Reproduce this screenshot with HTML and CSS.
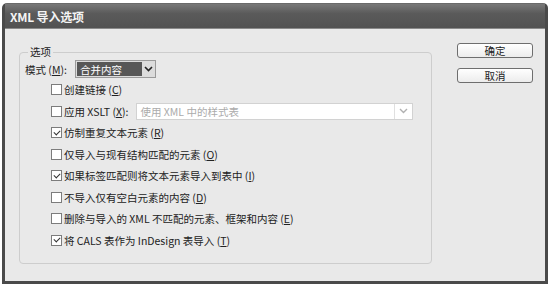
FILE: index.html
```html
<!DOCTYPE html>
<html lang="zh-CN">
<head>
    <meta charset="UTF-8">
    <title>XML 导入选项</title>
    <link rel="stylesheet" href="styles.css">
</head>
<body>
    <div class="window">
        <div class="titlebar"><span class="title">XML 导入选项</span></div>
        <div class="content">
            <fieldset class="group">
                <legend>选项</legend>
                <div class="mode-row">
                    <span class="label">模式 (<u>M</u>):</span>
                    <div class="select dark">
                        <span class="value">合并内容</span>
                        <span class="arrow"><svg width="9" height="6" viewBox="0 0 9 6"><polyline points="1,1 4.5,4.5 8,1" fill="none" stroke="#222" stroke-width="1.6"/></svg></span>
                    </div>
                </div>
                <ul class="options">
                    <li><span class="check"></span>创建链接 (<u>C</u>)</li>
                    <li>
                        <span class="check"></span>应用 XSLT (<u>X</u>):
                        <div class="select disabled">
                            <span class="value">使用 XML 中的样式表</span>
                            <span class="arrow"><svg width="9" height="6" viewBox="0 0 9 6"><polyline points="1,1 4.5,4.5 8,1" fill="none" stroke="#b0b0b0" stroke-width="1.4"/></svg></span>
                        </div>
                    </li>
                    <li><span class="check on"></span>仿制重复文本元素 (<u>R</u>)</li>
                    <li><span class="check"></span>仅导入与现有结构匹配的元素 (<u>O</u>)</li>
                    <li><span class="check on"></span>如果标签匹配则将文本元素导入到表中 (<u>I</u>)</li>
                    <li><span class="check"></span>不导入仅有空白元素的内容 (<u>D</u>)</li>
                    <li><span class="check"></span>删除与导入的 XML 不匹配的元素、框架和内容 (<u>E</u>)</li>
                    <li><span class="check on"></span>将 CALS 表作为 InDesign 表导入 (<u>T</u>)</li>
                </ul>
            </fieldset>
            <div class="buttons">
                <button>确定</button>
                <button>取消</button>
            </div>
        </div>
    </div>
</body>
</html>
```

FILE: styles.css
```css
body {
    margin: 0;
    padding: 0;
    background: #ffffff;
    font-family: "Noto Sans CJK SC", "Noto Sans", sans-serif;
    font-size: 10.5px;
    color: #222;
}

.window {
    margin: 3px 0 0 2px;
    width: 546px;
    height: 281px;
    box-sizing: border-box;
    border: 3px solid #4a4a4a;
    border-top: 1px solid #6a6a6a;
    border-radius: 5px 5px 0 0;
    background: #e9e9e9;
    display: flex;
    flex-direction: column;
}

.titlebar {
    height: 24px;
    background: linear-gradient(180deg, #787878, #5a5a5a 40%, #525252);
    border-bottom: 1px solid #8a8a8a;
    display: flex;
    align-items: center;
    padding-left: 5px;
}
.titlebar .title {
    color: #f4f4f4;
    font-weight: bold;
    font-size: 12px;
    letter-spacing: -0.2px;
}

.content {
    display: flex;
    align-items: flex-start;
    flex: 1;
}

.group {
    margin: 17px 0 0 14px;
    width: 413px;
    height: 218px;
    box-sizing: border-box;
    border: 1px solid #cdcdcd;
    border-radius: 4px;
    padding: 1px 13px 0 5px;
}
.group legend {
    padding: 0 2px;
    margin-left: 3px;
    line-height: 12px;
}

.mode-row {
    display: flex;
    align-items: center;
    height: 20px;
}
.mode-row .label {
    width: 50px;
}

.select {
    display: flex;
    align-items: stretch;
    box-sizing: border-box;
    border: 1px solid #9a9a9a;
    height: 18px;
}
.select .value {
    flex: 1;
    display: flex;
    align-items: center;
    padding-left: 3px;
}
.select .arrow {
    width: 13px;
    display: flex;
    align-items: center;
    justify-content: center;
}
.select.dark {
    width: 81px;
    background: #dcdcdc;
}
.select.dark .value {
    background: #575757;
    color: #fff;
    margin: 1px 0 1px 1px;
}
.select.disabled {
    width: 277px;
    height: 17px;
    margin-left: 8px;
    background: #fff;
    border-color: #d2d2d2;
    color: #ababab;
}
.select.disabled .arrow {
    width: 17px;
    border-left: 1px solid #e0e0e0;
}

.options {
    list-style: none;
    margin: 0;
    padding: 0;
}
.options li {
    display: flex;
    align-items: center;
    height: 21.5px;
    padding-left: 26px;
}

.check {
    width: 11px;
    height: 11px;
    box-sizing: border-box;
    border: 1px solid #7c7c7c;
    background: #fff;
    margin-right: 2px;
    flex: none;
    display: flex;
    align-items: center;
    justify-content: center;
}
.check.on::after {
    content: "";
    width: 5px;
    height: 3px;
    border-left: 1.3px solid #333;
    border-bottom: 1.3px solid #333;
    transform: translateY(-1px) rotate(-45deg);
}

.buttons {
    margin: 14px 0 0 25px;
    display: flex;
    flex-direction: column;
    gap: 10px;
}
.buttons button {
    width: 76px;
    height: 15px;
    padding: 0;
    border: 1px solid #6e6e6e;
    border-radius: 3px;
    background: linear-gradient(180deg, #ffffff, #ececec);
    font-family: "Noto Sans CJK SC", "Noto Sans", sans-serif;
    font-size: 10.5px;
    line-height: 13px;
    color: #222;
}
```
